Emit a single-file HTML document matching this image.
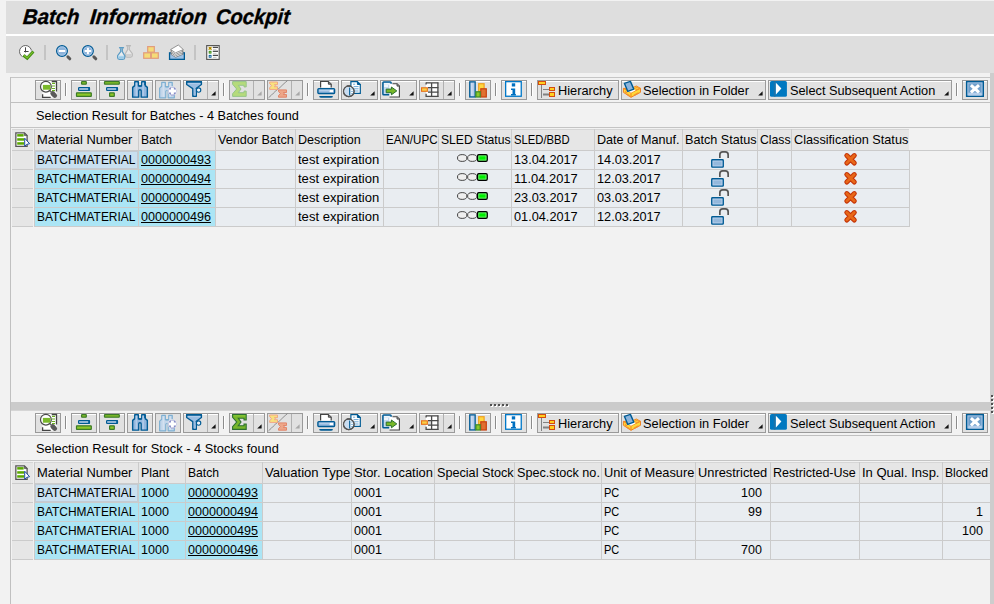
<!DOCTYPE html>
<html><head><meta charset="utf-8"><title>Batch Information Cockpit</title>
<style>
html,body{margin:0;padding:0;}
body{width:994px;height:604px;overflow:hidden;background:#f2f2f2;position:relative;font-family:'Liberation Sans', sans-serif;color:#000;}
div,span,svg{position:absolute;display:block;}
span{white-space:pre;transform-origin:0 50%;}
svg{overflow:visible;}
</style></head><body>
<div style="left:6px;top:1px;width:988px;height:33px;background:#dedede;"></div>
<div style="left:6px;top:34px;width:988px;height:2px;background:#ffffff;"></div>
<div style="left:6px;top:36px;width:988px;height:37px;background:#dedede;"></div>
<div style="left:44px;top:45px;width:2px;height:15px;background:#c4c4c4;"></div>
<div style="left:106px;top:45px;width:2px;height:15px;background:#c4c4c4;"></div>
<div style="left:194px;top:45px;width:2px;height:15px;background:#c4c4c4;"></div>
<svg style="left:19px;top:45px" width="16" height="16" viewBox="0 0 16 16"><circle cx="6.5" cy="6.5" r="6" fill="#fff" stroke="#555" stroke-width="0.9"/><path d="M6.5 2.3V7.4M5 6.5H9.6" stroke="#444" stroke-width="1" fill="none"/><path d="M4.4 10.3L8.2 13.3L14.4 6.5" stroke="#dedede" stroke-width="4.2" fill="none"/><path d="M4.4 10.3L8.2 13.3L14.4 6.5" stroke="#3e8a10" stroke-width="2.8" fill="none"/><path d="M4.7 10.2L8.2 12.9L14 6.9" stroke="#7cc02c" stroke-width="1.3" fill="none"/></svg>
<svg style="left:56px;top:45px" width="16" height="16" viewBox="0 0 16 16"><path d="M11.9 11.9L13.8 13.8" stroke="#585858" stroke-width="3" stroke-linecap="round"/><circle cx="6" cy="6" r="5.4" fill="#8db3db" stroke="#005b94" stroke-width="1.2"/><circle cx="6" cy="6" r="4.1" fill="none" stroke="#a9c8e8" stroke-width="0.9"/><rect x="2.8" y="5" width="6.4" height="2" fill="#fff"/></svg>
<svg style="left:82px;top:45px" width="16" height="16" viewBox="0 0 16 16"><path d="M11.9 11.9L13.8 13.8" stroke="#585858" stroke-width="3" stroke-linecap="round"/><circle cx="5.9" cy="6" r="5.4" fill="#8db3db" stroke="#005b94" stroke-width="1.2"/><circle cx="5.9" cy="6" r="4.1" fill="none" stroke="#a9c8e8" stroke-width="0.9"/><rect x="2.7" y="5" width="6.4" height="2" fill="#fff"/><rect x="4.9" y="2.8" width="2" height="6.4" fill="#fff"/></svg>
<svg style="left:117px;top:45px" width="16" height="16" viewBox="0 0 16 16"><path d="M10.7 1.2V4.6L8.3 8.6V10.6Q8.3 12.1 10 12.1H13.6Q15.35 12.1 15.35 10.6V8.6L12.3 4.6V1.2" fill="#e6e6e6" stroke="#b8b8b8" stroke-width="1.1"/><path d="M8.9 8.9H14.8V10.6Q14.8 11.6 13.6 11.6H10Q8.9 11.6 8.9 10.6Z" fill="#cfcfcf"/><path d="M9.6 0.8H13.4" stroke="#b8b8b8" stroke-width="1.4" stroke-linecap="round"/><path d="M3.7 3.2V6.6L0.65 10.6V12.6Q0.65 14.4 2.4 14.4H6Q7.75 14.4 7.75 12.6V10.6L5.3 6.6V3.2" fill="#e9ecef" stroke="#5c9cc4" stroke-width="1.3"/><path d="M1.3 10.8H7.1V12.6Q7.1 13.8 6 13.8H2.4Q1.3 13.8 1.3 12.6Z" fill="#a8d4ee"/><path d="M1.6 12.9H6.8" stroke="#86bce0" stroke-width="0.7"/><path d="M2.6 2.8H6.4" stroke="#5c9cc4" stroke-width="1.5" stroke-linecap="round"/></svg>
<svg style="left:143px;top:45px" width="16" height="16" viewBox="0 0 16 16"><rect x="4.699999999999999" y="1.6" width="6.6" height="5.6" fill="#f5dc78" stroke="#e29c7c" stroke-width="1.2"/><rect x="0.7" y="7.8" width="6.999999999999999" height="5.5" fill="#f5dc78" stroke="#e29c7c" stroke-width="1.2"/><rect x="8.3" y="7.8" width="6.999999999999999" height="5.5" fill="#f5dc78" stroke="#e29c7c" stroke-width="1.2"/></svg>
<svg style="left:168px;top:44px" width="18" height="17" viewBox="0 0 18 17"><rect x="1.55" y="8.85" width="14.8" height="6.5" fill="#9dc1e5" stroke="#005b94" stroke-width="1.3"/><path d="M10.3 5.5L15.4 10.1L7.5 13.3L2.6 10.0Z" fill="#fff" stroke="#6a6a6a" stroke-width="0.7"/><path d="M10.3 4L15.4 8.6L7.5 11.8L2.6 8.5Z" fill="#fff" stroke="#6a6a6a" stroke-width="0.7"/><path d="M10.3 2.5L15.4 7.1L7.5 10.3L2.6 7.0Z" fill="#fff" stroke="#6a6a6a" stroke-width="0.7"/><path d="M10.3 1L15.4 5.6L7.5 8.8L2.6 5.5Z" fill="#fff" stroke="#6a6a6a" stroke-width="0.7"/></svg>
<svg style="left:205px;top:44px" width="16" height="17" viewBox="0 0 16 17"><rect x="1.7" y="1.6" width="12.5" height="13.8" fill="#fff" stroke="#555" stroke-width="1.15"/><rect x="3.7" y="2.9" width="2.8" height="2.8" fill="#e6bc18"/><path d="M7.8 3.4H13" stroke="#4a4a4a" stroke-width="1.3"/><path d="M8 5.5H11.5" stroke="#c8c8c8" stroke-width="0.9"/><rect x="3.7" y="6.799999999999999" width="2.8" height="2.8" fill="#3a8a1a"/><path d="M7.8 7.299999999999999H13" stroke="#4a4a4a" stroke-width="1.3"/><path d="M8 9.399999999999999H11.5" stroke="#c8c8c8" stroke-width="0.9"/><rect x="3.7" y="10.9" width="2.8" height="2.8" fill="#005b94"/><path d="M7.8 11.4H13" stroke="#4a4a4a" stroke-width="1.3"/><path d="M8 13.5H11.5" stroke="#c8c8c8" stroke-width="0.9"/><rect x="4.6" y="7.7" width="1" height="1" fill="#b8e080"/><rect x="4.6" y="11.8" width="1" height="1" fill="#fff"/><path d="M3.6 2.8L6.6 5.8M6.6 2.8L3.6 5.8" stroke="#705000" stroke-width="0.6"/></svg>
<div style="left:990px;top:73px;width:4px;height:531px;background:#cdcdcd;"></div>
<div style="left:10px;top:77px;width:980px;height:1px;background:#c6c6c6;"></div>
<div style="left:10px;top:77px;width:1px;height:527px;background:#c0c0c0;"></div>
<div style="left:11px;top:102px;width:979px;height:1px;background:#c0c0c0;"></div>
<div style="left:11px;top:127px;width:979px;height:1px;background:#c4c4c4;"></div>
<div style="left:35px;top:80px;width:26px;height:20px;background:#e1e1e1;box-sizing:border-box;border:1px solid #9a9a9a;box-shadow:inset 0 1px 0 #fff;"></div>
<svg style="left:35px;top:80px" width="26" height="20" viewBox="0 0 26 20"><rect x="7.5" y="1.5" width="14" height="16" fill="#fff"/><path d="M16.7 1.5H21.5V11.5" stroke="#444" stroke-width="1.3" fill="none"/><path d="M7.6 14.3V17.4H15.7" stroke="#444" stroke-width="1.3" fill="none"/><path d="M17 3.4H20M17 6H20M17 8.5H20M17 10.7H20" stroke="#6ab020" stroke-width="1.2"/><path d="M17.7 13.5L19.8 15.6" stroke="#5a5a5a" stroke-width="4.6" stroke-linecap="round"/><path d="M14.6 10.4L17 12.8" stroke="#666" stroke-width="1.4"/><circle cx="10.9" cy="6.7" r="5.4" fill="#fff" stroke="#4a4a4a" stroke-width="1.2"/><rect x="7.9" y="4.9" width="7.6" height="4.8" fill="#7ab82a"/></svg>
<div style="left:65px;top:83px;width:1px;height:13px;background:#8c8c8c;box-shadow:1px 0 0 #fff;"></div>
<div style="left:71px;top:80px;width:26px;height:20px;background:#e1e1e1;box-sizing:border-box;border:1px solid #9a9a9a;box-shadow:inset 0 1px 0 #fff;"></div>
<svg style="left:71px;top:80px" width="26" height="20" viewBox="0 0 26 20"><rect x="10.6" y="1.7" width="4.7" height="2.5" rx="0.4" fill="#8cc828" stroke="#3c7a28" stroke-width="1.2"/><rect x="7.6" y="7.6" width="10.9" height="2.7" rx="0.6" fill="#c0d4ee" stroke="#005b94" stroke-width="1.2"/><rect x="17.2" y="7.3" width="1.7" height="3.3" fill="#005b94"/><rect x="5.5" y="12.8" width="14.8" height="3.5" rx="0.4" fill="#8cc828" stroke="#3c7a28" stroke-width="1.2"/></svg>
<div style="left:99px;top:80px;width:26px;height:20px;background:#e1e1e1;box-sizing:border-box;border:1px solid #9a9a9a;box-shadow:inset 0 1px 0 #fff;"></div>
<svg style="left:99px;top:80px" width="26" height="20" viewBox="0 0 26 20"><rect x="5.5" y="1.7" width="14.8" height="2.5" rx="0.4" fill="#8cc828" stroke="#3c7a28" stroke-width="1.2"/><rect x="7.6" y="7.6" width="10.9" height="2.7" rx="0.6" fill="#c0d4ee" stroke="#005b94" stroke-width="1.2"/><rect x="17.2" y="7.3" width="1.7" height="3.3" fill="#005b94"/><rect x="10.6" y="12.8" width="4.7" height="3.5" rx="0.4" fill="#8cc828" stroke="#3c7a28" stroke-width="1.2"/></svg>
<div style="left:127px;top:80px;width:26px;height:20px;background:#e1e1e1;box-sizing:border-box;border:1px solid #9a9a9a;box-shadow:inset 0 1px 0 #fff;"></div>
<svg style="left:127px;top:80px" width="26" height="20" viewBox="0 0 26 20"><g transform="translate(0 0)"><path d="M7.75 1.75H11.35V5.9H14.75V1.75H18.25V5.6L20.35 7.4V17.15H14.15V10.7Q14.15 9.8 12.95 9.8Q11.75 9.8 11.75 10.7V17.15H5.65V7.4L7.75 5.6Z" fill="#93b7de" stroke="#005b94" stroke-width="1.4" stroke-linejoin="round"/><rect x="8.6" y="2.6" width="1.6" height="13.6" fill="#b3cdea"/><rect x="15.4" y="2.6" width="1.4" height="13.6" fill="#b3cdea"/><rect x="11.6" y="5.3" width="2.9" height="1.5" fill="#005b94"/></g><rect x="17.2" y="2" width="1.4" height="3" fill="#005b94"/></svg>
<div style="left:155px;top:80px;width:26px;height:20px;background:#e1e1e1;box-sizing:border-box;border:1px solid #9a9a9a;"></div>
<svg style="left:155px;top:80px" width="26" height="20" viewBox="0 0 26 20"><g transform="translate(-1 0.7)"><path d="M7.75 1.75H11.35V5.9H14.75V1.75H18.25V5.6L20.35 7.4V17.15H14.15V10.7Q14.15 9.8 12.95 9.8Q11.75 9.8 11.75 10.7V17.15H5.65V7.4L7.75 5.6Z" fill="#c3d6ea" stroke="#7eb0d2" stroke-width="1.2" stroke-linejoin="round"/><rect x="8.6" y="2.6" width="1.6" height="13.6" fill="#d3e1f0"/><rect x="15.4" y="2.6" width="1.4" height="13.6" fill="#d3e1f0"/><rect x="11.6" y="5.3" width="2.9" height="1.5" fill="#7eb0d2"/></g><circle cx="17.4" cy="11" r="4.7" fill="#e6e6ee"/><circle cx="17.4" cy="11" r="3.9" fill="#868cc6"/><rect x="16" y="14.3" width="3" height="1.3" fill="#9a9ed0"/><path d="M17.4 7.6V14.4M13.8 11H21" stroke="#fff" stroke-width="2.9"/></svg>
<div style="left:183px;top:80px;width:36px;height:20px;background:#e1e1e1;box-sizing:border-box;border:1px solid #9a9a9a;box-shadow:inset 0 1px 0 #fff;"></div>
<div style="left:207px;top:81px;width:1px;height:18px;background:#b0b0b0;"></div>
<svg style="left:183px;top:80px" width="26" height="20" viewBox="0 0 26 20"><path d="M3.65 1.75H18.45V4.5L13.35 8.2V16.25H9.75V8.6L3.65 4.5Z" fill="#9bbde1" stroke="#005b94" stroke-width="1.3" stroke-linejoin="round"/><path d="M3.2 1.9H18.9" stroke="#005b94" stroke-width="1.6"/><path d="M5 3.4H17" stroke="#b4cfec" stroke-width="1"/><circle cx="15.6" cy="10.1" r="2.2" fill="#eef4fa" stroke="#005b94" stroke-width="1.1"/><rect x="12.6" y="8.6" width="1.4" height="3.4" fill="#005b94"/><rect x="11" y="9" width="1.7" height="6.6" fill="#9bbde1"/></svg>
<svg style="left:211px;top:91px" width="5" height="5" viewBox="0 0 5 5"><path d="M4.6 0.2V4.6H0.2Z" fill="#111"/></svg>
<div style="left:223px;top:83px;width:1px;height:13px;background:#8c8c8c;box-shadow:1px 0 0 #fff;"></div>
<div style="left:229px;top:80px;width:36px;height:20px;background:#e1e1e1;box-sizing:border-box;border:1px solid #9a9a9a;"></div>
<div style="left:253px;top:81px;width:1px;height:18px;background:#b0b0b0;"></div>
<svg style="left:229px;top:80px" width="26" height="20" viewBox="0 0 26 20"><polygon points="3.60,1.60 17.20,1.60 17.20,6.93 15.02,6.93 15.02,5.30 9.31,5.30 12.03,9.00 9.31,12.70 15.02,12.70 15.02,11.07 17.20,11.07 17.20,16.40 3.60,16.40 3.60,13.74 7.68,9.00 3.60,4.26" fill="#b5db7b" stroke="#97c58a" stroke-width="1" stroke-linejoin="miter"/></svg>
<svg style="left:257px;top:91px" width="5" height="5" viewBox="0 0 5 5"><path d="M4.6 0.2V4.6H0.2Z" fill="#a8a8a8"/></svg>
<div style="left:267px;top:80px;width:36px;height:20px;background:#e1e1e1;box-sizing:border-box;border:1px solid #9a9a9a;"></div>
<div style="left:291px;top:81px;width:1px;height:18px;background:#b0b0b0;"></div>
<svg style="left:267px;top:80px" width="26" height="20" viewBox="0 0 26 20"><path d="M1.5 17.8C6 14 7 12 10.5 9.5C14 7 15 5 20.3 0.8" stroke="#555" stroke-width="0.6" fill="none"/><polygon points="2.70,2.00 10.50,2.00 10.50,4.66 7.38,4.66 8.47,5.70 7.38,6.74 10.50,6.74 10.50,9.40 2.70,9.40 2.70,7.77 4.57,5.70 2.70,3.63" fill="#f8e27e" stroke="#f2a684" stroke-width="1.0" stroke-linejoin="round"/><polygon points="11.50,9.90 19.50,9.90 19.50,12.53 16.30,12.53 17.42,13.55 16.30,14.57 19.50,14.57 19.50,17.20 11.50,17.20 11.50,15.59 13.42,13.55 11.50,11.51" fill="#eda688" stroke="#e2866a" stroke-width="1.0" stroke-linejoin="round"/></svg>
<svg style="left:295px;top:91px" width="5" height="5" viewBox="0 0 5 5"><path d="M4.6 0.2V4.6H0.2Z" fill="#a8a8a8"/></svg>
<div style="left:307px;top:83px;width:1px;height:13px;background:#8c8c8c;box-shadow:1px 0 0 #fff;"></div>
<div style="left:313px;top:80px;width:26px;height:20px;background:#e1e1e1;box-sizing:border-box;border:1px solid #9a9a9a;box-shadow:inset 0 1px 0 #fff;"></div>
<svg style="left:313px;top:80px" width="26" height="20" viewBox="0 0 26 20"><path d="M7.6 7.6V1.5H15.4L18.2 4.2V7.6" fill="#fff" stroke="#444" stroke-width="1.2"/><path d="M15.4 1.5V4.2H18.2" fill="#888" stroke="#444" stroke-width="1"/><rect x="4.9" y="8.6" width="16.7" height="4.9" rx="0.9" fill="#9bbde1" stroke="#005b94" stroke-width="1.4"/><rect x="16.6" y="9.9" width="3.4" height="2.2" fill="#fff"/><rect x="6.3" y="9.9" width="10" height="0.9" fill="#b9d1ec"/><path d="M6.2 15.9H19.9Q19.9 17.8 17.8 17.8H8.3Q6.2 17.8 6.2 15.9Z" fill="#005b94"/></svg>
<div style="left:341px;top:80px;width:37px;height:20px;background:#e1e1e1;box-sizing:border-box;border:1px solid #9a9a9a;box-shadow:inset 0 1px 0 #fff;"></div>
<svg style="left:341px;top:80px" width="26" height="20" viewBox="0 0 26 20"><path d="M9.9 1.6H16.4L19.3 4.5V13.3H9.9Z" fill="#fff" stroke="#005b94" stroke-width="1.2"/><path d="M16.4 1.6V4.5H19.3Z" fill="#005b94" stroke="#005b94" stroke-width="1"/><path d="M12 4.2H14.2M12.6 6.6H17.6M12.6 8.8H17.6M12.6 11H17.6" stroke="#6ea8d6" stroke-width="1"/><circle cx="7.8" cy="11.3" r="5.3" fill="#fff" stroke="#555" stroke-width="1.2"/><path d="M8.4 6.3A5 5 0 0 0 8.4 16.3Z" fill="#c9ddf1"/><path d="M10 9H12.3M10 11.4H12.8M10 13.6H12" stroke="#8ab8dc" stroke-width="1"/><path d="M8.7 7.4V15.4" stroke="#005b94" stroke-width="1.2"/><circle cx="7.8" cy="11.3" r="5.3" fill="none" stroke="#555" stroke-width="1.2"/><path d="M5.6 6H10" stroke="#555" stroke-width="1.6"/></svg>
<svg style="left:370px;top:91px" width="5" height="5" viewBox="0 0 5 5"><path d="M4.6 0.2V4.6H0.2Z" fill="#111"/></svg>
<div style="left:380px;top:80px;width:37px;height:20px;background:#e1e1e1;box-sizing:border-box;border:1px solid #9a9a9a;box-shadow:inset 0 1px 0 #fff;"></div>
<svg style="left:380px;top:80px" width="26" height="20" viewBox="0 0 26 20"><rect x="2.9" y="1.9" width="8.2" height="12.8" rx="0.8" fill="#c3d8ee" stroke="#005b94" stroke-width="1.5"/><path d="M4 3.8H9.5M4 6H8" stroke="#fff" stroke-width="1.3"/><path d="M9.3 3.7H17L19.4 6.1V17H9.3Z" fill="#fff"/><path d="M12.5 3.7H17L19.4 6.1V17H9.5" fill="none" stroke="#444" stroke-width="1.1"/><path d="M17 3.7V6.1H19.4" fill="#999" stroke="#444" stroke-width="0.9"/><path d="M9.8 2V14.6H3" fill="none" stroke="#005b94" stroke-width="0"/><path d="M6.2 9.1H11.4V7L16.8 10.9L11.4 14.8V12.7H6.2Z" fill="#78b828" stroke="#2c7030" stroke-width="1" stroke-linejoin="round"/></svg>
<svg style="left:409px;top:91px" width="5" height="5" viewBox="0 0 5 5"><path d="M4.6 0.2V4.6H0.2Z" fill="#111"/></svg>
<div style="left:419px;top:80px;width:36px;height:20px;background:#e1e1e1;box-sizing:border-box;border:1px solid #9a9a9a;box-shadow:inset 0 1px 0 #fff;"></div>
<div style="left:443px;top:81px;width:1px;height:18px;background:#b0b0b0;"></div>
<svg style="left:419px;top:80px" width="26" height="20" viewBox="0 0 26 20"><rect x="7" y="2.9" width="12" height="13.6" fill="#fff"/><rect x="9" y="8" width="3.2" height="3.8" fill="#dadada"/><path d="M7 2.9H19.4M9 7.7H19.4M9 12.1H19.4M7 16.4H19.4" stroke="#4a4a4a" stroke-width="1.2" fill="none"/><path d="M12.6 2.9V16.4M18.9 2.4V16.9M7.1 2.4V4.6M7.1 13.8V16.9" stroke="#4a4a4a" stroke-width="1.3" fill="none"/><rect x="2.55" y="7.8" width="5.8" height="3.5" fill="#f8d048" stroke="#e8701a" stroke-width="1.1"/></svg>
<svg style="left:447px;top:91px" width="5" height="5" viewBox="0 0 5 5"><path d="M4.6 0.2V4.6H0.2Z" fill="#111"/></svg>
<div style="left:459px;top:83px;width:1px;height:13px;background:#8c8c8c;box-shadow:1px 0 0 #fff;"></div>
<div style="left:465px;top:80px;width:26px;height:20px;background:#e1e1e1;box-sizing:border-box;border:1px solid #9a9a9a;box-shadow:inset 0 1px 0 #fff;"></div>
<svg style="left:465px;top:80px" width="26" height="20" viewBox="0 0 26 20"><rect x="13.7" y="3.7" width="5.4" height="8" fill="#ffd840" stroke="#f0a020" stroke-width="1.2"/><rect x="4.75" y="1.85" width="5.4" height="15.1" fill="#b6cdea" stroke="#005b94" stroke-width="1.3"/><rect x="6" y="3" width="1.5" height="13" fill="#cddcf0"/><rect x="15.8" y="8.8" width="5.5" height="8.2" fill="#e07030" stroke="#c84010" stroke-width="1.2"/><rect x="10.9" y="11.8" width="4.3" height="5.2" fill="#8cc828" stroke="#3c8a28" stroke-width="1.2"/></svg>
<div style="left:495px;top:83px;width:1px;height:13px;background:#8c8c8c;box-shadow:1px 0 0 #fff;"></div>
<div style="left:501px;top:80px;width:26px;height:20px;background:#e1e1e1;box-sizing:border-box;border:1px solid #9a9a9a;box-shadow:inset 0 1px 0 #fff;"></div>
<svg style="left:501px;top:80px" width="26" height="20" viewBox="0 0 26 20"><rect x="4.65" y="1.65" width="15.6" height="14.6" fill="#fff" stroke="#0078c8" stroke-width="1.3"/><rect x="10.8" y="3.3" width="3.4" height="3.2" fill="#0070c0"/><path d="M10 8.4H14.2V14H14.9V15.5H10V14H11.5V10H10Z" fill="#0070c0"/></svg>
<div style="left:531px;top:83px;width:1px;height:13px;background:#8c8c8c;box-shadow:1px 0 0 #fff;"></div>
<div style="left:537px;top:80px;width:82px;height:20px;background:#e1e1e1;box-sizing:border-box;border:1px solid #9a9a9a;box-shadow:inset 0 1px 0 #fff;"></div>
<svg style="left:537px;top:80px" width="22" height="20" viewBox="0 0 22 20"><rect x="1.5" y="1.5" width="7" height="3" fill="#ffd020" stroke="#d44c10" stroke-width="1"/><rect x="12.5" y="7.5" width="5" height="3" fill="#ffd020" stroke="#d44c10" stroke-width="1"/><rect x="12.5" y="12.5" width="5" height="4" fill="#ffd020" stroke="#d44c10" stroke-width="1"/><path d="M4.5 5.5V18" stroke="#222" stroke-width="1" stroke-dasharray="1 1"/><path d="M6.5 9.5H12" stroke="#222" stroke-width="1" stroke-dasharray="1 1"/><path d="M6.5 14.5H12" stroke="#222" stroke-width="2" stroke-dasharray="1 1"/></svg>
<div style="left:621px;top:80px;width:145px;height:20px;background:#e1e1e1;box-sizing:border-box;border:1px solid #9a9a9a;box-shadow:inset 0 1px 0 #fff;"></div>
<svg style="left:621px;top:80px" width="22" height="20" viewBox="0 0 22 20"><path d="M2.4 8.4V12.3L10 17.3L19.5 12.3V8.3L15.3 6L10.2 8.4Z" fill="#ffd838" stroke="#f28320" stroke-width="1" stroke-linejoin="round"/><path d="M2.4 8.4L10 12.8L19.5 8.3M10 12.8V17.3" fill="none" stroke="#f28320" stroke-width="1"/><path d="M6.5 11L10 12.7L14.8 10.3L13 9.3Z" fill="#fff"/><path d="M13.5 8.4L16.8 7.2M14.5 10.2L18 8.6" stroke="#f49030" stroke-width="1"/><path d="M6 14.2L8.5 15.9M13 15.3L17.5 12.8M4 11.5L6 13" stroke="#f49030" stroke-width="1.4"/><path d="M3.4 3.3L9.4 1.4L12.8 9.1L6.8 11.4Z" fill="#8cb4dc" stroke="#005b94" stroke-width="1.4" stroke-linejoin="round"/></svg>
<svg style="left:758px;top:91px" width="5" height="5" viewBox="0 0 5 5"><path d="M4.6 0.2V4.6H0.2Z" fill="#111"/></svg>
<div style="left:768px;top:80px;width:184px;height:20px;background:#e1e1e1;box-sizing:border-box;border:1px solid #9a9a9a;box-shadow:inset 0 1px 0 #fff;"></div>
<svg style="left:768px;top:80px" width="22" height="20" viewBox="0 0 22 20"><rect x="2" y="1" width="16.9" height="15.8" rx="1.6" fill="#0078c0"/><rect x="5.8" y="1" width="1.7" height="15.8" fill="#2870a0" opacity=".75"/><path d="M7.9 2.7L13.4 8.6L7.9 14.4Z" fill="#fff"/></svg>
<svg style="left:944px;top:91px" width="5" height="5" viewBox="0 0 5 5"><path d="M4.6 0.2V4.6H0.2Z" fill="#111"/></svg>
<div style="left:956px;top:83px;width:1px;height:13px;background:#8c8c8c;box-shadow:1px 0 0 #fff;"></div>
<div style="left:962px;top:80px;width:26px;height:20px;background:#e1e1e1;box-sizing:border-box;border:1px solid #9a9a9a;box-shadow:inset 0 1px 0 #fff;"></div>
<svg style="left:962px;top:80px" width="26" height="20" viewBox="0 0 26 20"><rect x="4.6" y="1.6" width="16.7" height="14.7" fill="#a9c5e5" stroke="#005b94" stroke-width="1.4"/><rect x="6.4" y="3.4" width="13.1" height="10.2" fill="#6f9fcb"/><rect x="6.4" y="12.6" width="13.1" height="2.9" fill="#b4cdea"/><path d="M8.9 5.1L17 12.3M17 5.1L8.9 12.3" stroke="#fff" stroke-width="3.1"/></svg>
<div style="left:12px;top:129px;width:21px;height:21px;background:#e6e6e6;border-top:1px solid #d6d6d6;box-sizing:border-box;"></div>
<div style="left:35px;top:129px;width:874px;height:21px;background:#e6e6e6;border-top:1px solid #d6d6d6;box-sizing:border-box;"></div>
<svg style="left:14px;top:131px" width="17" height="17" viewBox="0 0 17 17"><path d="M1.85 1.85H10.4L13.1 4.6V15.3H1.85Z" fill="#fff" stroke="#555" stroke-width="1.3"/><path d="M10.4 1.85V4.6H13.1Z" fill="#777" stroke="#555" stroke-width="0.8"/><rect x="3.2" y="3.1" width="6.4" height="2.5" fill="#5aa800"/><rect x="3.2" y="7.2" width="6.8" height="2.5" fill="#5aa800"/><rect x="3.2" y="11.2" width="6.8" height="2.5" fill="#5aa800"/><path d="M10.7 7.2V15.2L12.7 13.4L15.6 12.7Z" fill="#fff" stroke="#1848a0" stroke-width="1" stroke-linejoin="round"/></svg>
<div style="left:12px;top:151px;width:21px;height:18px;background:#e6e6e6;"></div>
<div style="left:35px;top:151px;width:874px;height:18px;background:#e9edf1;"></div>
<div style="left:35px;top:151px;width:180px;height:18px;background:#abe5f5;"></div>
<div style="left:12px;top:170px;width:21px;height:18px;background:#e6e6e6;"></div>
<div style="left:35px;top:170px;width:874px;height:18px;background:#e9edf1;"></div>
<div style="left:35px;top:170px;width:180px;height:18px;background:#abe5f5;"></div>
<div style="left:12px;top:189px;width:21px;height:18px;background:#e6e6e6;"></div>
<div style="left:35px;top:189px;width:874px;height:18px;background:#e9edf1;"></div>
<div style="left:35px;top:189px;width:180px;height:18px;background:#abe5f5;"></div>
<div style="left:12px;top:208px;width:21px;height:18px;background:#e6e6e6;"></div>
<div style="left:35px;top:208px;width:874px;height:18px;background:#e9edf1;"></div>
<div style="left:35px;top:208px;width:180px;height:18px;background:#abe5f5;"></div>
<div style="left:35px;top:151px;width:103px;height:18px;background:#c9e0f0;box-sizing:border-box;border:1px solid #c3cbd3;"></div>
<div style="left:12px;top:150px;width:978px;height:1px;background:#cbcbcb;"></div>
<div style="left:12px;top:169px;width:897px;height:1px;background:#cbcbcb;"></div>
<div style="left:12px;top:188px;width:897px;height:1px;background:#cbcbcb;"></div>
<div style="left:12px;top:207px;width:897px;height:1px;background:#cbcbcb;"></div>
<div style="left:12px;top:226px;width:897px;height:1px;background:#cbcbcb;"></div>
<div style="left:34px;top:129px;width:1px;height:98px;background:#cbcbcb;"></div>
<div style="left:138px;top:129px;width:1px;height:98px;background:#cbcbcb;"></div>
<div style="left:215px;top:129px;width:1px;height:98px;background:#cbcbcb;"></div>
<div style="left:295px;top:129px;width:1px;height:98px;background:#cbcbcb;"></div>
<div style="left:383px;top:129px;width:1px;height:98px;background:#cbcbcb;"></div>
<div style="left:438px;top:129px;width:1px;height:98px;background:#cbcbcb;"></div>
<div style="left:511px;top:129px;width:1px;height:98px;background:#cbcbcb;"></div>
<div style="left:594px;top:129px;width:1px;height:98px;background:#cbcbcb;"></div>
<div style="left:682px;top:129px;width:1px;height:98px;background:#cbcbcb;"></div>
<div style="left:757px;top:129px;width:1px;height:98px;background:#cbcbcb;"></div>
<div style="left:791px;top:129px;width:1px;height:98px;background:#cbcbcb;"></div>
<div style="left:909px;top:150px;width:1px;height:77px;background:#cbcbcb;"></div>
<div style="left:33px;top:129px;width:2px;height:98px;background:#efefef;"></div>
<div style="left:34px;top:129px;width:1px;height:98px;background:#cbcbcb;"></div>
<div style="left:11px;top:435px;width:979px;height:1px;background:#c0c0c0;"></div>
<div style="left:11px;top:460px;width:979px;height:1px;background:#c4c4c4;"></div>
<div style="left:35px;top:413px;width:26px;height:20px;background:#e1e1e1;box-sizing:border-box;border:1px solid #9a9a9a;box-shadow:inset 0 1px 0 #fff;"></div>
<svg style="left:35px;top:413px" width="26" height="20" viewBox="0 0 26 20"><rect x="7.5" y="1.5" width="14" height="16" fill="#fff"/><path d="M16.7 1.5H21.5V11.5" stroke="#444" stroke-width="1.3" fill="none"/><path d="M7.6 14.3V17.4H15.7" stroke="#444" stroke-width="1.3" fill="none"/><path d="M17 3.4H20M17 6H20M17 8.5H20M17 10.7H20" stroke="#6ab020" stroke-width="1.2"/><path d="M17.7 13.5L19.8 15.6" stroke="#5a5a5a" stroke-width="4.6" stroke-linecap="round"/><path d="M14.6 10.4L17 12.8" stroke="#666" stroke-width="1.4"/><circle cx="10.9" cy="6.7" r="5.4" fill="#fff" stroke="#4a4a4a" stroke-width="1.2"/><rect x="7.9" y="4.9" width="7.6" height="4.8" fill="#7ab82a"/></svg>
<div style="left:65px;top:416px;width:1px;height:13px;background:#8c8c8c;box-shadow:1px 0 0 #fff;"></div>
<div style="left:71px;top:413px;width:26px;height:20px;background:#e1e1e1;box-sizing:border-box;border:1px solid #9a9a9a;box-shadow:inset 0 1px 0 #fff;"></div>
<svg style="left:71px;top:413px" width="26" height="20" viewBox="0 0 26 20"><rect x="10.6" y="1.7" width="4.7" height="2.5" rx="0.4" fill="#8cc828" stroke="#3c7a28" stroke-width="1.2"/><rect x="7.6" y="7.6" width="10.9" height="2.7" rx="0.6" fill="#c0d4ee" stroke="#005b94" stroke-width="1.2"/><rect x="17.2" y="7.3" width="1.7" height="3.3" fill="#005b94"/><rect x="5.5" y="12.8" width="14.8" height="3.5" rx="0.4" fill="#8cc828" stroke="#3c7a28" stroke-width="1.2"/></svg>
<div style="left:99px;top:413px;width:26px;height:20px;background:#e1e1e1;box-sizing:border-box;border:1px solid #9a9a9a;box-shadow:inset 0 1px 0 #fff;"></div>
<svg style="left:99px;top:413px" width="26" height="20" viewBox="0 0 26 20"><rect x="5.5" y="1.7" width="14.8" height="2.5" rx="0.4" fill="#8cc828" stroke="#3c7a28" stroke-width="1.2"/><rect x="7.6" y="7.6" width="10.9" height="2.7" rx="0.6" fill="#c0d4ee" stroke="#005b94" stroke-width="1.2"/><rect x="17.2" y="7.3" width="1.7" height="3.3" fill="#005b94"/><rect x="10.6" y="12.8" width="4.7" height="3.5" rx="0.4" fill="#8cc828" stroke="#3c7a28" stroke-width="1.2"/></svg>
<div style="left:127px;top:413px;width:26px;height:20px;background:#e1e1e1;box-sizing:border-box;border:1px solid #9a9a9a;box-shadow:inset 0 1px 0 #fff;"></div>
<svg style="left:127px;top:413px" width="26" height="20" viewBox="0 0 26 20"><g transform="translate(0 0)"><path d="M7.75 1.75H11.35V5.9H14.75V1.75H18.25V5.6L20.35 7.4V17.15H14.15V10.7Q14.15 9.8 12.95 9.8Q11.75 9.8 11.75 10.7V17.15H5.65V7.4L7.75 5.6Z" fill="#93b7de" stroke="#005b94" stroke-width="1.4" stroke-linejoin="round"/><rect x="8.6" y="2.6" width="1.6" height="13.6" fill="#b3cdea"/><rect x="15.4" y="2.6" width="1.4" height="13.6" fill="#b3cdea"/><rect x="11.6" y="5.3" width="2.9" height="1.5" fill="#005b94"/></g><rect x="17.2" y="2" width="1.4" height="3" fill="#005b94"/></svg>
<div style="left:155px;top:413px;width:26px;height:20px;background:#e1e1e1;box-sizing:border-box;border:1px solid #9a9a9a;"></div>
<svg style="left:155px;top:413px" width="26" height="20" viewBox="0 0 26 20"><g transform="translate(-1 0.7)"><path d="M7.75 1.75H11.35V5.9H14.75V1.75H18.25V5.6L20.35 7.4V17.15H14.15V10.7Q14.15 9.8 12.95 9.8Q11.75 9.8 11.75 10.7V17.15H5.65V7.4L7.75 5.6Z" fill="#c3d6ea" stroke="#7eb0d2" stroke-width="1.2" stroke-linejoin="round"/><rect x="8.6" y="2.6" width="1.6" height="13.6" fill="#d3e1f0"/><rect x="15.4" y="2.6" width="1.4" height="13.6" fill="#d3e1f0"/><rect x="11.6" y="5.3" width="2.9" height="1.5" fill="#7eb0d2"/></g><circle cx="17.4" cy="11" r="4.7" fill="#e6e6ee"/><circle cx="17.4" cy="11" r="3.9" fill="#868cc6"/><rect x="16" y="14.3" width="3" height="1.3" fill="#9a9ed0"/><path d="M17.4 7.6V14.4M13.8 11H21" stroke="#fff" stroke-width="2.9"/></svg>
<div style="left:183px;top:413px;width:36px;height:20px;background:#e1e1e1;box-sizing:border-box;border:1px solid #9a9a9a;box-shadow:inset 0 1px 0 #fff;"></div>
<div style="left:207px;top:414px;width:1px;height:18px;background:#b0b0b0;"></div>
<svg style="left:183px;top:413px" width="26" height="20" viewBox="0 0 26 20"><path d="M3.65 1.75H18.45V4.5L13.35 8.2V16.25H9.75V8.6L3.65 4.5Z" fill="#9bbde1" stroke="#005b94" stroke-width="1.3" stroke-linejoin="round"/><path d="M3.2 1.9H18.9" stroke="#005b94" stroke-width="1.6"/><path d="M5 3.4H17" stroke="#b4cfec" stroke-width="1"/><circle cx="15.6" cy="10.1" r="2.2" fill="#eef4fa" stroke="#005b94" stroke-width="1.1"/><rect x="12.6" y="8.6" width="1.4" height="3.4" fill="#005b94"/><rect x="11" y="9" width="1.7" height="6.6" fill="#9bbde1"/></svg>
<svg style="left:211px;top:424px" width="5" height="5" viewBox="0 0 5 5"><path d="M4.6 0.2V4.6H0.2Z" fill="#111"/></svg>
<div style="left:223px;top:416px;width:1px;height:13px;background:#8c8c8c;box-shadow:1px 0 0 #fff;"></div>
<div style="left:229px;top:413px;width:36px;height:20px;background:#e1e1e1;box-sizing:border-box;border:1px solid #9a9a9a;box-shadow:inset 0 1px 0 #fff;"></div>
<div style="left:253px;top:414px;width:1px;height:18px;background:#b0b0b0;"></div>
<svg style="left:229px;top:413px" width="26" height="20" viewBox="0 0 26 20"><polygon points="3.60,1.60 17.20,1.60 17.20,6.93 15.02,6.93 15.02,5.30 9.31,5.30 12.03,9.00 9.31,12.70 15.02,12.70 15.02,11.07 17.20,11.07 17.20,16.40 3.60,16.40 3.60,13.74 7.68,9.00 3.60,4.26" fill="#76b62a" stroke="#2c7030" stroke-width="1.1" stroke-linejoin="miter"/><path d="M4.5 2.8H16.5" stroke="#8fd03a" stroke-width="1"/></svg>
<svg style="left:257px;top:424px" width="5" height="5" viewBox="0 0 5 5"><path d="M4.6 0.2V4.6H0.2Z" fill="#111"/></svg>
<div style="left:267px;top:413px;width:36px;height:20px;background:#e1e1e1;box-sizing:border-box;border:1px solid #9a9a9a;"></div>
<div style="left:291px;top:414px;width:1px;height:18px;background:#b0b0b0;"></div>
<svg style="left:267px;top:413px" width="26" height="20" viewBox="0 0 26 20"><path d="M1.5 17.8C6 14 7 12 10.5 9.5C14 7 15 5 20.3 0.8" stroke="#555" stroke-width="0.6" fill="none"/><polygon points="2.70,2.00 10.50,2.00 10.50,4.66 7.38,4.66 8.47,5.70 7.38,6.74 10.50,6.74 10.50,9.40 2.70,9.40 2.70,7.77 4.57,5.70 2.70,3.63" fill="#f8e27e" stroke="#f2a684" stroke-width="1.0" stroke-linejoin="round"/><polygon points="11.50,9.90 19.50,9.90 19.50,12.53 16.30,12.53 17.42,13.55 16.30,14.57 19.50,14.57 19.50,17.20 11.50,17.20 11.50,15.59 13.42,13.55 11.50,11.51" fill="#eda688" stroke="#e2866a" stroke-width="1.0" stroke-linejoin="round"/></svg>
<svg style="left:295px;top:424px" width="5" height="5" viewBox="0 0 5 5"><path d="M4.6 0.2V4.6H0.2Z" fill="#a8a8a8"/></svg>
<div style="left:307px;top:416px;width:1px;height:13px;background:#8c8c8c;box-shadow:1px 0 0 #fff;"></div>
<div style="left:313px;top:413px;width:26px;height:20px;background:#e1e1e1;box-sizing:border-box;border:1px solid #9a9a9a;box-shadow:inset 0 1px 0 #fff;"></div>
<svg style="left:313px;top:413px" width="26" height="20" viewBox="0 0 26 20"><path d="M7.6 7.6V1.5H15.4L18.2 4.2V7.6" fill="#fff" stroke="#444" stroke-width="1.2"/><path d="M15.4 1.5V4.2H18.2" fill="#888" stroke="#444" stroke-width="1"/><rect x="4.9" y="8.6" width="16.7" height="4.9" rx="0.9" fill="#9bbde1" stroke="#005b94" stroke-width="1.4"/><rect x="16.6" y="9.9" width="3.4" height="2.2" fill="#fff"/><rect x="6.3" y="9.9" width="10" height="0.9" fill="#b9d1ec"/><path d="M6.2 15.9H19.9Q19.9 17.8 17.8 17.8H8.3Q6.2 17.8 6.2 15.9Z" fill="#005b94"/></svg>
<div style="left:341px;top:413px;width:37px;height:20px;background:#e1e1e1;box-sizing:border-box;border:1px solid #9a9a9a;box-shadow:inset 0 1px 0 #fff;"></div>
<svg style="left:341px;top:413px" width="26" height="20" viewBox="0 0 26 20"><path d="M9.9 1.6H16.4L19.3 4.5V13.3H9.9Z" fill="#fff" stroke="#005b94" stroke-width="1.2"/><path d="M16.4 1.6V4.5H19.3Z" fill="#005b94" stroke="#005b94" stroke-width="1"/><path d="M12 4.2H14.2M12.6 6.6H17.6M12.6 8.8H17.6M12.6 11H17.6" stroke="#6ea8d6" stroke-width="1"/><circle cx="7.8" cy="11.3" r="5.3" fill="#fff" stroke="#555" stroke-width="1.2"/><path d="M8.4 6.3A5 5 0 0 0 8.4 16.3Z" fill="#c9ddf1"/><path d="M10 9H12.3M10 11.4H12.8M10 13.6H12" stroke="#8ab8dc" stroke-width="1"/><path d="M8.7 7.4V15.4" stroke="#005b94" stroke-width="1.2"/><circle cx="7.8" cy="11.3" r="5.3" fill="none" stroke="#555" stroke-width="1.2"/><path d="M5.6 6H10" stroke="#555" stroke-width="1.6"/></svg>
<svg style="left:370px;top:424px" width="5" height="5" viewBox="0 0 5 5"><path d="M4.6 0.2V4.6H0.2Z" fill="#111"/></svg>
<div style="left:380px;top:413px;width:37px;height:20px;background:#e1e1e1;box-sizing:border-box;border:1px solid #9a9a9a;box-shadow:inset 0 1px 0 #fff;"></div>
<svg style="left:380px;top:413px" width="26" height="20" viewBox="0 0 26 20"><rect x="2.9" y="1.9" width="8.2" height="12.8" rx="0.8" fill="#c3d8ee" stroke="#005b94" stroke-width="1.5"/><path d="M4 3.8H9.5M4 6H8" stroke="#fff" stroke-width="1.3"/><path d="M9.3 3.7H17L19.4 6.1V17H9.3Z" fill="#fff"/><path d="M12.5 3.7H17L19.4 6.1V17H9.5" fill="none" stroke="#444" stroke-width="1.1"/><path d="M17 3.7V6.1H19.4" fill="#999" stroke="#444" stroke-width="0.9"/><path d="M9.8 2V14.6H3" fill="none" stroke="#005b94" stroke-width="0"/><path d="M6.2 9.1H11.4V7L16.8 10.9L11.4 14.8V12.7H6.2Z" fill="#78b828" stroke="#2c7030" stroke-width="1" stroke-linejoin="round"/></svg>
<svg style="left:409px;top:424px" width="5" height="5" viewBox="0 0 5 5"><path d="M4.6 0.2V4.6H0.2Z" fill="#111"/></svg>
<div style="left:419px;top:413px;width:36px;height:20px;background:#e1e1e1;box-sizing:border-box;border:1px solid #9a9a9a;box-shadow:inset 0 1px 0 #fff;"></div>
<div style="left:443px;top:414px;width:1px;height:18px;background:#b0b0b0;"></div>
<svg style="left:419px;top:413px" width="26" height="20" viewBox="0 0 26 20"><rect x="7" y="2.9" width="12" height="13.6" fill="#fff"/><rect x="9" y="8" width="3.2" height="3.8" fill="#dadada"/><path d="M7 2.9H19.4M9 7.7H19.4M9 12.1H19.4M7 16.4H19.4" stroke="#4a4a4a" stroke-width="1.2" fill="none"/><path d="M12.6 2.9V16.4M18.9 2.4V16.9M7.1 2.4V4.6M7.1 13.8V16.9" stroke="#4a4a4a" stroke-width="1.3" fill="none"/><rect x="2.55" y="7.8" width="5.8" height="3.5" fill="#f8d048" stroke="#e8701a" stroke-width="1.1"/></svg>
<svg style="left:447px;top:424px" width="5" height="5" viewBox="0 0 5 5"><path d="M4.6 0.2V4.6H0.2Z" fill="#111"/></svg>
<div style="left:459px;top:416px;width:1px;height:13px;background:#8c8c8c;box-shadow:1px 0 0 #fff;"></div>
<div style="left:465px;top:413px;width:26px;height:20px;background:#e1e1e1;box-sizing:border-box;border:1px solid #9a9a9a;box-shadow:inset 0 1px 0 #fff;"></div>
<svg style="left:465px;top:413px" width="26" height="20" viewBox="0 0 26 20"><rect x="13.7" y="3.7" width="5.4" height="8" fill="#ffd840" stroke="#f0a020" stroke-width="1.2"/><rect x="4.75" y="1.85" width="5.4" height="15.1" fill="#b6cdea" stroke="#005b94" stroke-width="1.3"/><rect x="6" y="3" width="1.5" height="13" fill="#cddcf0"/><rect x="15.8" y="8.8" width="5.5" height="8.2" fill="#e07030" stroke="#c84010" stroke-width="1.2"/><rect x="10.9" y="11.8" width="4.3" height="5.2" fill="#8cc828" stroke="#3c8a28" stroke-width="1.2"/></svg>
<div style="left:495px;top:416px;width:1px;height:13px;background:#8c8c8c;box-shadow:1px 0 0 #fff;"></div>
<div style="left:501px;top:413px;width:26px;height:20px;background:#e1e1e1;box-sizing:border-box;border:1px solid #9a9a9a;box-shadow:inset 0 1px 0 #fff;"></div>
<svg style="left:501px;top:413px" width="26" height="20" viewBox="0 0 26 20"><rect x="4.65" y="1.65" width="15.6" height="14.6" fill="#fff" stroke="#0078c8" stroke-width="1.3"/><rect x="10.8" y="3.3" width="3.4" height="3.2" fill="#0070c0"/><path d="M10 8.4H14.2V14H14.9V15.5H10V14H11.5V10H10Z" fill="#0070c0"/></svg>
<div style="left:531px;top:416px;width:1px;height:13px;background:#8c8c8c;box-shadow:1px 0 0 #fff;"></div>
<div style="left:537px;top:413px;width:82px;height:20px;background:#e1e1e1;box-sizing:border-box;border:1px solid #9a9a9a;box-shadow:inset 0 1px 0 #fff;"></div>
<svg style="left:537px;top:413px" width="22" height="20" viewBox="0 0 22 20"><rect x="1.5" y="1.5" width="7" height="3" fill="#ffd020" stroke="#d44c10" stroke-width="1"/><rect x="12.5" y="7.5" width="5" height="3" fill="#ffd020" stroke="#d44c10" stroke-width="1"/><rect x="12.5" y="12.5" width="5" height="4" fill="#ffd020" stroke="#d44c10" stroke-width="1"/><path d="M4.5 5.5V18" stroke="#222" stroke-width="1" stroke-dasharray="1 1"/><path d="M6.5 9.5H12" stroke="#222" stroke-width="1" stroke-dasharray="1 1"/><path d="M6.5 14.5H12" stroke="#222" stroke-width="2" stroke-dasharray="1 1"/></svg>
<div style="left:621px;top:413px;width:145px;height:20px;background:#e1e1e1;box-sizing:border-box;border:1px solid #9a9a9a;box-shadow:inset 0 1px 0 #fff;"></div>
<svg style="left:621px;top:413px" width="22" height="20" viewBox="0 0 22 20"><path d="M2.4 8.4V12.3L10 17.3L19.5 12.3V8.3L15.3 6L10.2 8.4Z" fill="#ffd838" stroke="#f28320" stroke-width="1" stroke-linejoin="round"/><path d="M2.4 8.4L10 12.8L19.5 8.3M10 12.8V17.3" fill="none" stroke="#f28320" stroke-width="1"/><path d="M6.5 11L10 12.7L14.8 10.3L13 9.3Z" fill="#fff"/><path d="M13.5 8.4L16.8 7.2M14.5 10.2L18 8.6" stroke="#f49030" stroke-width="1"/><path d="M6 14.2L8.5 15.9M13 15.3L17.5 12.8M4 11.5L6 13" stroke="#f49030" stroke-width="1.4"/><path d="M3.4 3.3L9.4 1.4L12.8 9.1L6.8 11.4Z" fill="#8cb4dc" stroke="#005b94" stroke-width="1.4" stroke-linejoin="round"/></svg>
<svg style="left:758px;top:424px" width="5" height="5" viewBox="0 0 5 5"><path d="M4.6 0.2V4.6H0.2Z" fill="#111"/></svg>
<div style="left:768px;top:413px;width:184px;height:20px;background:#e1e1e1;box-sizing:border-box;border:1px solid #9a9a9a;box-shadow:inset 0 1px 0 #fff;"></div>
<svg style="left:768px;top:413px" width="22" height="20" viewBox="0 0 22 20"><rect x="2" y="1" width="16.9" height="15.8" rx="1.6" fill="#0078c0"/><rect x="5.8" y="1" width="1.7" height="15.8" fill="#2870a0" opacity=".75"/><path d="M7.9 2.7L13.4 8.6L7.9 14.4Z" fill="#fff"/></svg>
<svg style="left:944px;top:424px" width="5" height="5" viewBox="0 0 5 5"><path d="M4.6 0.2V4.6H0.2Z" fill="#111"/></svg>
<div style="left:956px;top:416px;width:1px;height:13px;background:#8c8c8c;box-shadow:1px 0 0 #fff;"></div>
<div style="left:962px;top:413px;width:26px;height:20px;background:#e1e1e1;box-sizing:border-box;border:1px solid #9a9a9a;box-shadow:inset 0 1px 0 #fff;"></div>
<svg style="left:962px;top:413px" width="26" height="20" viewBox="0 0 26 20"><rect x="4.6" y="1.6" width="16.7" height="14.7" fill="#a9c5e5" stroke="#005b94" stroke-width="1.4"/><rect x="6.4" y="3.4" width="13.1" height="10.2" fill="#6f9fcb"/><rect x="6.4" y="12.6" width="13.1" height="2.9" fill="#b4cdea"/><path d="M8.9 5.1L17 12.3M17 5.1L8.9 12.3" stroke="#fff" stroke-width="3.1"/></svg>
<div style="left:12px;top:462px;width:21px;height:21px;background:#e6e6e6;border-top:1px solid #d6d6d6;box-sizing:border-box;"></div>
<div style="left:35px;top:462px;width:955px;height:21px;background:#e6e6e6;border-top:1px solid #d6d6d6;box-sizing:border-box;"></div>
<svg style="left:14px;top:464px" width="17" height="17" viewBox="0 0 17 17"><path d="M1.85 1.85H10.4L13.1 4.6V15.3H1.85Z" fill="#fff" stroke="#555" stroke-width="1.3"/><path d="M10.4 1.85V4.6H13.1Z" fill="#777" stroke="#555" stroke-width="0.8"/><rect x="3.2" y="3.1" width="6.4" height="2.5" fill="#5aa800"/><rect x="3.2" y="7.2" width="6.8" height="2.5" fill="#5aa800"/><rect x="3.2" y="11.2" width="6.8" height="2.5" fill="#5aa800"/><path d="M10.7 7.2V15.2L12.7 13.4L15.6 12.7Z" fill="#fff" stroke="#1848a0" stroke-width="1" stroke-linejoin="round"/></svg>
<div style="left:12px;top:484px;width:21px;height:18px;background:#e6e6e6;"></div>
<div style="left:35px;top:484px;width:955px;height:18px;background:#e9edf1;"></div>
<div style="left:35px;top:484px;width:227px;height:18px;background:#abe5f5;"></div>
<div style="left:12px;top:503px;width:21px;height:18px;background:#e6e6e6;"></div>
<div style="left:35px;top:503px;width:955px;height:18px;background:#e9edf1;"></div>
<div style="left:35px;top:503px;width:227px;height:18px;background:#abe5f5;"></div>
<div style="left:12px;top:522px;width:21px;height:18px;background:#e6e6e6;"></div>
<div style="left:35px;top:522px;width:955px;height:18px;background:#e9edf1;"></div>
<div style="left:35px;top:522px;width:227px;height:18px;background:#abe5f5;"></div>
<div style="left:12px;top:541px;width:21px;height:18px;background:#e6e6e6;"></div>
<div style="left:35px;top:541px;width:955px;height:18px;background:#e9edf1;"></div>
<div style="left:35px;top:541px;width:227px;height:18px;background:#abe5f5;"></div>
<div style="left:35px;top:484px;width:103px;height:18px;background:#c9e0f0;box-sizing:border-box;border:1px solid #c3cbd3;"></div>
<div style="left:12px;top:483px;width:978px;height:1px;background:#cbcbcb;"></div>
<div style="left:12px;top:502px;width:978px;height:1px;background:#cbcbcb;"></div>
<div style="left:12px;top:521px;width:978px;height:1px;background:#cbcbcb;"></div>
<div style="left:12px;top:540px;width:978px;height:1px;background:#cbcbcb;"></div>
<div style="left:12px;top:559px;width:978px;height:1px;background:#cbcbcb;"></div>
<div style="left:34px;top:462px;width:1px;height:98px;background:#cbcbcb;"></div>
<div style="left:138px;top:462px;width:1px;height:98px;background:#cbcbcb;"></div>
<div style="left:185px;top:462px;width:1px;height:98px;background:#cbcbcb;"></div>
<div style="left:262px;top:462px;width:1px;height:98px;background:#cbcbcb;"></div>
<div style="left:351px;top:462px;width:1px;height:98px;background:#cbcbcb;"></div>
<div style="left:434px;top:462px;width:1px;height:98px;background:#cbcbcb;"></div>
<div style="left:514px;top:462px;width:1px;height:98px;background:#cbcbcb;"></div>
<div style="left:601px;top:462px;width:1px;height:98px;background:#cbcbcb;"></div>
<div style="left:695px;top:462px;width:1px;height:98px;background:#cbcbcb;"></div>
<div style="left:770px;top:462px;width:1px;height:98px;background:#cbcbcb;"></div>
<div style="left:859px;top:462px;width:1px;height:98px;background:#cbcbcb;"></div>
<div style="left:942px;top:462px;width:1px;height:98px;background:#cbcbcb;"></div>
<div style="left:33px;top:462px;width:2px;height:98px;background:#efefef;"></div>
<div style="left:34px;top:462px;width:1px;height:98px;background:#cbcbcb;"></div>
<svg style="left:456px;top:153px" width="33" height="11" viewBox="0 0 33 11"><ellipse cx="6.2" cy="5" rx="4.7" ry="3.4" fill="#efefef" stroke="#444" stroke-width="1"/><ellipse cx="16.3" cy="5" rx="4.7" ry="3.4" fill="#efefef" stroke="#444" stroke-width="1"/><rect x="21.6" y="1.7" width="9.6" height="6.6" rx="1.2" fill="#00f000" stroke="#000" stroke-width="1.4"/><rect x="22.8" y="2.9" width="7.2" height="4.2" fill="none" stroke="#8cf08c" stroke-width="0.8"/></svg>
<svg style="left:710px;top:150px" width="20" height="19" viewBox="0 0 20 19"><path d="M9.85 7.9V4.8Q9.85 1.9 12.7 1.9H15.3Q18.15 1.9 18.15 4.8V7.9" fill="none" stroke="#555" stroke-width="1.7"/><rect x="1.75" y="9.75" width="11.5" height="7.4" rx="0.7" fill="#94b8dc" stroke="#005b94" stroke-width="1.4"/><rect x="3.1" y="11.1" width="8.8" height="4.7" fill="none" stroke="#b6cee9" stroke-width="0.8"/></svg>
<svg style="left:843px;top:152px" width="16" height="15" viewBox="0 0 16 15"><path d="M3.8 3.6L11.3 11.1M11.3 3.6L3.8 11.1" stroke="#c43408" stroke-width="5" stroke-linecap="round"/><path d="M3.8 3.6L11.3 11.1M11.3 3.6L3.8 11.1" stroke="#e86818" stroke-width="2.8" stroke-linecap="round"/></svg>
<svg style="left:456px;top:172px" width="33" height="11" viewBox="0 0 33 11"><ellipse cx="6.2" cy="5" rx="4.7" ry="3.4" fill="#efefef" stroke="#444" stroke-width="1"/><ellipse cx="16.3" cy="5" rx="4.7" ry="3.4" fill="#efefef" stroke="#444" stroke-width="1"/><rect x="21.6" y="1.7" width="9.6" height="6.6" rx="1.2" fill="#00f000" stroke="#000" stroke-width="1.4"/><rect x="22.8" y="2.9" width="7.2" height="4.2" fill="none" stroke="#8cf08c" stroke-width="0.8"/></svg>
<svg style="left:710px;top:169px" width="20" height="19" viewBox="0 0 20 19"><path d="M9.85 7.9V4.8Q9.85 1.9 12.7 1.9H15.3Q18.15 1.9 18.15 4.8V7.9" fill="none" stroke="#555" stroke-width="1.7"/><rect x="1.75" y="9.75" width="11.5" height="7.4" rx="0.7" fill="#94b8dc" stroke="#005b94" stroke-width="1.4"/><rect x="3.1" y="11.1" width="8.8" height="4.7" fill="none" stroke="#b6cee9" stroke-width="0.8"/></svg>
<svg style="left:843px;top:171px" width="16" height="15" viewBox="0 0 16 15"><path d="M3.8 3.6L11.3 11.1M11.3 3.6L3.8 11.1" stroke="#c43408" stroke-width="5" stroke-linecap="round"/><path d="M3.8 3.6L11.3 11.1M11.3 3.6L3.8 11.1" stroke="#e86818" stroke-width="2.8" stroke-linecap="round"/></svg>
<svg style="left:456px;top:191px" width="33" height="11" viewBox="0 0 33 11"><ellipse cx="6.2" cy="5" rx="4.7" ry="3.4" fill="#efefef" stroke="#444" stroke-width="1"/><ellipse cx="16.3" cy="5" rx="4.7" ry="3.4" fill="#efefef" stroke="#444" stroke-width="1"/><rect x="21.6" y="1.7" width="9.6" height="6.6" rx="1.2" fill="#00f000" stroke="#000" stroke-width="1.4"/><rect x="22.8" y="2.9" width="7.2" height="4.2" fill="none" stroke="#8cf08c" stroke-width="0.8"/></svg>
<svg style="left:710px;top:188px" width="20" height="19" viewBox="0 0 20 19"><path d="M9.85 7.9V4.8Q9.85 1.9 12.7 1.9H15.3Q18.15 1.9 18.15 4.8V7.9" fill="none" stroke="#555" stroke-width="1.7"/><rect x="1.75" y="9.75" width="11.5" height="7.4" rx="0.7" fill="#94b8dc" stroke="#005b94" stroke-width="1.4"/><rect x="3.1" y="11.1" width="8.8" height="4.7" fill="none" stroke="#b6cee9" stroke-width="0.8"/></svg>
<svg style="left:843px;top:190px" width="16" height="15" viewBox="0 0 16 15"><path d="M3.8 3.6L11.3 11.1M11.3 3.6L3.8 11.1" stroke="#c43408" stroke-width="5" stroke-linecap="round"/><path d="M3.8 3.6L11.3 11.1M11.3 3.6L3.8 11.1" stroke="#e86818" stroke-width="2.8" stroke-linecap="round"/></svg>
<svg style="left:456px;top:210px" width="33" height="11" viewBox="0 0 33 11"><ellipse cx="6.2" cy="5" rx="4.7" ry="3.4" fill="#efefef" stroke="#444" stroke-width="1"/><ellipse cx="16.3" cy="5" rx="4.7" ry="3.4" fill="#efefef" stroke="#444" stroke-width="1"/><rect x="21.6" y="1.7" width="9.6" height="6.6" rx="1.2" fill="#00f000" stroke="#000" stroke-width="1.4"/><rect x="22.8" y="2.9" width="7.2" height="4.2" fill="none" stroke="#8cf08c" stroke-width="0.8"/></svg>
<svg style="left:710px;top:207px" width="20" height="19" viewBox="0 0 20 19"><path d="M9.85 7.9V4.8Q9.85 1.9 12.7 1.9H15.3Q18.15 1.9 18.15 4.8V7.9" fill="none" stroke="#555" stroke-width="1.7"/><rect x="1.75" y="9.75" width="11.5" height="7.4" rx="0.7" fill="#94b8dc" stroke="#005b94" stroke-width="1.4"/><rect x="3.1" y="11.1" width="8.8" height="4.7" fill="none" stroke="#b6cee9" stroke-width="0.8"/></svg>
<svg style="left:843px;top:209px" width="16" height="15" viewBox="0 0 16 15"><path d="M3.8 3.6L11.3 11.1M11.3 3.6L3.8 11.1" stroke="#c43408" stroke-width="5" stroke-linecap="round"/><path d="M3.8 3.6L11.3 11.1M11.3 3.6L3.8 11.1" stroke="#e86818" stroke-width="2.8" stroke-linecap="round"/></svg>
<div style="left:11px;top:402px;width:979px;height:8px;background:#cbcbcb;"></div>
<div style="left:11px;top:410px;width:979px;height:1px;background:#d5d5d5;"></div>
<div style="left:491px;top:405px;width:2px;height:2px;background:#ffffff;"></div>
<div style="left:490px;top:404px;width:2px;height:2px;background:#505050;"></div>
<div style="left:495px;top:405px;width:2px;height:2px;background:#ffffff;"></div>
<div style="left:494px;top:404px;width:2px;height:2px;background:#505050;"></div>
<div style="left:499px;top:405px;width:2px;height:2px;background:#ffffff;"></div>
<div style="left:498px;top:404px;width:2px;height:2px;background:#505050;"></div>
<div style="left:503px;top:405px;width:2px;height:2px;background:#ffffff;"></div>
<div style="left:502px;top:404px;width:2px;height:2px;background:#505050;"></div>
<div style="left:507px;top:405px;width:2px;height:2px;background:#ffffff;"></div>
<div style="left:506px;top:404px;width:2px;height:2px;background:#505050;"></div>
<div style="left:992px;top:396px;width:2px;height:2px;background:#ffffff;"></div>
<div style="left:991px;top:395px;width:2px;height:2px;background:#505050;"></div>
<div style="left:992px;top:400px;width:2px;height:2px;background:#ffffff;"></div>
<div style="left:991px;top:399px;width:2px;height:2px;background:#505050;"></div>
<div style="left:992px;top:404px;width:2px;height:2px;background:#ffffff;"></div>
<div style="left:991px;top:403px;width:2px;height:2px;background:#505050;"></div>
<div style="left:992px;top:408px;width:2px;height:2px;background:#ffffff;"></div>
<div style="left:991px;top:407px;width:2px;height:2px;background:#505050;"></div>
<div style="left:992px;top:412px;width:2px;height:2px;background:#ffffff;"></div>
<div style="left:991px;top:411px;width:2px;height:2px;background:#505050;"></div>
<span style="left:22.6px;top:3.62px;font:italic bold 21.3px 'Liberation Sans', sans-serif;line-height:26px;transform:scaleX(0.9565) skewX(-5deg);-webkit-text-stroke:0.35px #000;">Batch</span>
<span style="left:90.2px;top:3.62px;font:italic bold 21.3px 'Liberation Sans', sans-serif;line-height:26px;transform:scaleX(1.0006) skewX(-5deg);-webkit-text-stroke:0.35px #000;">Information</span>
<span style="left:215.8px;top:3.62px;font:italic bold 21.3px 'Liberation Sans', sans-serif;line-height:26px;transform:scaleX(0.9474) skewX(-5deg);-webkit-text-stroke:0.35px #000;">Cockpit</span>
<span style="left:36px;top:107.50px;font:13.0px 'Liberation Sans', sans-serif;line-height:16px;transform:scaleX(0.9779);">Selection Result for Batches - 4 Batches found</span>
<span style="left:37px;top:131.50px;font:13.0px 'Liberation Sans', sans-serif;line-height:16px;transform:scaleX(0.9928);">Material Number</span>
<span style="left:141px;top:131.50px;font:13.0px 'Liberation Sans', sans-serif;line-height:16px;transform:scaleX(0.9353);">Batch</span>
<span style="left:218px;top:131.50px;font:13.0px 'Liberation Sans', sans-serif;line-height:16px;transform:scaleX(0.9697);">Vendor Batch</span>
<span style="left:298px;top:131.50px;font:13.0px 'Liberation Sans', sans-serif;line-height:16px;transform:scaleX(0.9657);">Description</span>
<span style="left:386px;top:131.50px;font:13.0px 'Liberation Sans', sans-serif;line-height:16px;transform:scaleX(0.8911);">EAN/UPC</span>
<span style="left:441px;top:131.50px;font:13.0px 'Liberation Sans', sans-serif;line-height:16px;transform:scaleX(0.9350);">SLED Status</span>
<span style="left:514px;top:131.50px;font:13.0px 'Liberation Sans', sans-serif;line-height:16px;transform:scaleX(0.8661);">SLED/BBD</span>
<span style="left:597px;top:131.50px;font:13.0px 'Liberation Sans', sans-serif;line-height:16px;transform:scaleX(0.9686);">Date of Manuf.</span>
<span style="left:685px;top:131.50px;font:13.0px 'Liberation Sans', sans-serif;line-height:16px;transform:scaleX(0.9713);">Batch Status</span>
<span style="left:760px;top:131.50px;font:13.0px 'Liberation Sans', sans-serif;line-height:16px;transform:scaleX(0.9411);">Class</span>
<span style="left:794px;top:131.50px;font:13.0px 'Liberation Sans', sans-serif;line-height:16px;transform:scaleX(0.9764);">Classification Status</span>
<span style="left:37px;top:151.50px;font:13.0px 'Liberation Sans', sans-serif;line-height:16px;transform:scaleX(0.9183);">BATCHMATERIAL</span>
<span style="left:141px;top:151.50px;font:13.0px 'Liberation Sans', sans-serif;line-height:16px;transform:scaleX(0.9666);text-decoration:underline;text-underline-offset:1px;">0000000493</span>
<span style="left:298px;top:151.50px;font:13.0px 'Liberation Sans', sans-serif;line-height:16px;transform:scaleX(1.0032);">test expiration</span>
<span style="left:514px;top:151.50px;font:13.0px 'Liberation Sans', sans-serif;line-height:16px;transform:scaleX(0.9788);">13.04.2017</span>
<span style="left:597px;top:151.50px;font:13.0px 'Liberation Sans', sans-serif;line-height:16px;transform:scaleX(0.9788);">14.03.2017</span>
<span style="left:37px;top:170.50px;font:13.0px 'Liberation Sans', sans-serif;line-height:16px;transform:scaleX(0.9183);">BATCHMATERIAL</span>
<span style="left:141px;top:170.50px;font:13.0px 'Liberation Sans', sans-serif;line-height:16px;transform:scaleX(0.9666);text-decoration:underline;text-underline-offset:1px;">0000000494</span>
<span style="left:298px;top:170.50px;font:13.0px 'Liberation Sans', sans-serif;line-height:16px;transform:scaleX(1.0032);">test expiration</span>
<span style="left:514px;top:170.50px;font:13.0px 'Liberation Sans', sans-serif;line-height:16px;transform:scaleX(0.9936);">11.04.2017</span>
<span style="left:597px;top:170.50px;font:13.0px 'Liberation Sans', sans-serif;line-height:16px;transform:scaleX(0.9788);">12.03.2017</span>
<span style="left:37px;top:189.50px;font:13.0px 'Liberation Sans', sans-serif;line-height:16px;transform:scaleX(0.9183);">BATCHMATERIAL</span>
<span style="left:141px;top:189.50px;font:13.0px 'Liberation Sans', sans-serif;line-height:16px;transform:scaleX(0.9666);text-decoration:underline;text-underline-offset:1px;">0000000495</span>
<span style="left:298px;top:189.50px;font:13.0px 'Liberation Sans', sans-serif;line-height:16px;transform:scaleX(1.0032);">test expiration</span>
<span style="left:514px;top:189.50px;font:13.0px 'Liberation Sans', sans-serif;line-height:16px;transform:scaleX(0.9788);">23.03.2017</span>
<span style="left:597px;top:189.50px;font:13.0px 'Liberation Sans', sans-serif;line-height:16px;transform:scaleX(0.9788);">03.03.2017</span>
<span style="left:37px;top:208.50px;font:13.0px 'Liberation Sans', sans-serif;line-height:16px;transform:scaleX(0.9183);">BATCHMATERIAL</span>
<span style="left:141px;top:208.50px;font:13.0px 'Liberation Sans', sans-serif;line-height:16px;transform:scaleX(0.9666);text-decoration:underline;text-underline-offset:1px;">0000000496</span>
<span style="left:298px;top:208.50px;font:13.0px 'Liberation Sans', sans-serif;line-height:16px;transform:scaleX(1.0032);">test expiration</span>
<span style="left:514px;top:208.50px;font:13.0px 'Liberation Sans', sans-serif;line-height:16px;transform:scaleX(0.9788);">01.04.2017</span>
<span style="left:597px;top:208.50px;font:13.0px 'Liberation Sans', sans-serif;line-height:16px;transform:scaleX(0.9788);">12.03.2017</span>
<span style="left:36px;top:440.50px;font:13.0px 'Liberation Sans', sans-serif;line-height:16px;transform:scaleX(0.9854);">Selection Result for Stock - 4 Stocks found</span>
<span style="left:37px;top:464.50px;font:13.0px 'Liberation Sans', sans-serif;line-height:16px;transform:scaleX(0.9928);">Material Number</span>
<span style="left:141px;top:464.50px;font:13.0px 'Liberation Sans', sans-serif;line-height:16px;transform:scaleX(0.9480);">Plant</span>
<span style="left:188px;top:464.50px;font:13.0px 'Liberation Sans', sans-serif;line-height:16px;transform:scaleX(0.9353);">Batch</span>
<span style="left:265px;top:464.50px;font:13.0px 'Liberation Sans', sans-serif;line-height:16px;transform:scaleX(1.0069);">Valuation Type</span>
<span style="left:354px;top:464.50px;font:13.0px 'Liberation Sans', sans-serif;line-height:16px;transform:scaleX(0.9925);">Stor. Location</span>
<span style="left:437px;top:464.50px;font:13.0px 'Liberation Sans', sans-serif;line-height:16px;transform:scaleX(0.9725);">Special Stock</span>
<span style="left:517px;top:464.50px;font:13.0px 'Liberation Sans', sans-serif;line-height:16px;transform:scaleX(0.9721);">Spec.stock no.</span>
<span style="left:604px;top:464.50px;font:13.0px 'Liberation Sans', sans-serif;line-height:16px;transform:scaleX(0.9840);">Unit of Measure</span>
<span style="left:698px;top:464.50px;font:13.0px 'Liberation Sans', sans-serif;line-height:16px;transform:scaleX(0.9875);">Unrestricted</span>
<span style="left:773px;top:464.50px;font:13.0px 'Liberation Sans', sans-serif;line-height:16px;transform:scaleX(0.9631);">Restricted-Use</span>
<span style="left:862px;top:464.50px;font:13.0px 'Liberation Sans', sans-serif;line-height:16px;transform:scaleX(1.0022);">In Qual. Insp.</span>
<span style="left:945px;top:464.50px;font:13.0px 'Liberation Sans', sans-serif;line-height:16px;transform:scaleX(0.9319);">Blocked</span>
<span style="left:37px;top:484.50px;font:13.0px 'Liberation Sans', sans-serif;line-height:16px;transform:scaleX(0.9183);">BATCHMATERIAL</span>
<span style="left:141px;top:484.50px;font:13.0px 'Liberation Sans', sans-serif;line-height:16px;transform:scaleX(0.9647);">1000</span>
<span style="left:188px;top:484.50px;font:13.0px 'Liberation Sans', sans-serif;line-height:16px;transform:scaleX(0.9666);text-decoration:underline;text-underline-offset:1px;">0000000493</span>
<span style="left:354px;top:484.50px;font:13.0px 'Liberation Sans', sans-serif;line-height:16px;transform:scaleX(0.9681);">0001</span>
<span style="left:604px;top:484.50px;font:13.0px 'Liberation Sans', sans-serif;line-height:16px;transform:scaleX(0.8471);">PC</span>
<span style="left:741px;top:484.50px;font:13.0px 'Liberation Sans', sans-serif;line-height:16px;transform:scaleX(0.9630);">100</span>
<span style="left:37px;top:503.50px;font:13.0px 'Liberation Sans', sans-serif;line-height:16px;transform:scaleX(0.9183);">BATCHMATERIAL</span>
<span style="left:141px;top:503.50px;font:13.0px 'Liberation Sans', sans-serif;line-height:16px;transform:scaleX(0.9647);">1000</span>
<span style="left:188px;top:503.50px;font:13.0px 'Liberation Sans', sans-serif;line-height:16px;transform:scaleX(0.9666);text-decoration:underline;text-underline-offset:1px;">0000000494</span>
<span style="left:354px;top:503.50px;font:13.0px 'Liberation Sans', sans-serif;line-height:16px;transform:scaleX(0.9681);">0001</span>
<span style="left:604px;top:503.50px;font:13.0px 'Liberation Sans', sans-serif;line-height:16px;transform:scaleX(0.8471);">PC</span>
<span style="left:748px;top:503.50px;font:13.0px 'Liberation Sans', sans-serif;line-height:16px;transform:scaleX(0.9607);">99</span>
<span style="left:976px;top:503.50px;font:13.0px 'Liberation Sans', sans-serif;line-height:16px;transform:scaleX(0.9676);">1</span>
<span style="left:37px;top:522.50px;font:13.0px 'Liberation Sans', sans-serif;line-height:16px;transform:scaleX(0.9183);">BATCHMATERIAL</span>
<span style="left:141px;top:522.50px;font:13.0px 'Liberation Sans', sans-serif;line-height:16px;transform:scaleX(0.9647);">1000</span>
<span style="left:188px;top:522.50px;font:13.0px 'Liberation Sans', sans-serif;line-height:16px;transform:scaleX(0.9666);text-decoration:underline;text-underline-offset:1px;">0000000495</span>
<span style="left:354px;top:522.50px;font:13.0px 'Liberation Sans', sans-serif;line-height:16px;transform:scaleX(0.9681);">0001</span>
<span style="left:604px;top:522.50px;font:13.0px 'Liberation Sans', sans-serif;line-height:16px;transform:scaleX(0.8471);">PC</span>
<span style="left:962px;top:522.50px;font:13.0px 'Liberation Sans', sans-serif;line-height:16px;transform:scaleX(0.9676);">100</span>
<span style="left:37px;top:541.50px;font:13.0px 'Liberation Sans', sans-serif;line-height:16px;transform:scaleX(0.9183);">BATCHMATERIAL</span>
<span style="left:141px;top:541.50px;font:13.0px 'Liberation Sans', sans-serif;line-height:16px;transform:scaleX(0.9647);">1000</span>
<span style="left:188px;top:541.50px;font:13.0px 'Liberation Sans', sans-serif;line-height:16px;transform:scaleX(0.9666);text-decoration:underline;text-underline-offset:1px;">0000000496</span>
<span style="left:354px;top:541.50px;font:13.0px 'Liberation Sans', sans-serif;line-height:16px;transform:scaleX(0.9681);">0001</span>
<span style="left:604px;top:541.50px;font:13.0px 'Liberation Sans', sans-serif;line-height:16px;transform:scaleX(0.8471);">PC</span>
<span style="left:741px;top:541.50px;font:13.0px 'Liberation Sans', sans-serif;line-height:16px;transform:scaleX(0.9630);">700</span>
<span style="left:558px;top:82.50px;font:13.0px 'Liberation Sans', sans-serif;line-height:16px;transform:scaleX(0.9816);">Hierarchy</span>
<span style="left:643px;top:82.50px;font:13.0px 'Liberation Sans', sans-serif;line-height:16px;transform:scaleX(0.9845);">Selection in Folder</span>
<span style="left:790px;top:82.50px;font:13.0px 'Liberation Sans', sans-serif;line-height:16px;transform:scaleX(0.9806);">Select Subsequent Action</span>
<span style="left:558px;top:415.50px;font:13.0px 'Liberation Sans', sans-serif;line-height:16px;transform:scaleX(0.9816);">Hierarchy</span>
<span style="left:643px;top:415.50px;font:13.0px 'Liberation Sans', sans-serif;line-height:16px;transform:scaleX(0.9845);">Selection in Folder</span>
<span style="left:790px;top:415.50px;font:13.0px 'Liberation Sans', sans-serif;line-height:16px;transform:scaleX(0.9806);">Select Subsequent Action</span>
</body></html>
